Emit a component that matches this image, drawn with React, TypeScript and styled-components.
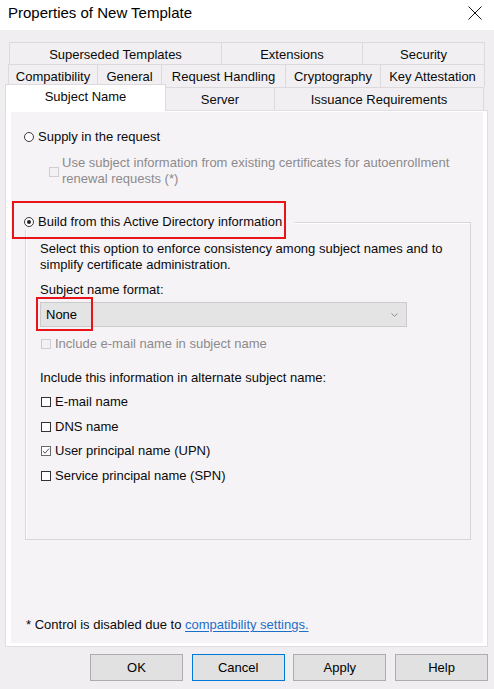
import React from "react";
import styled, { createGlobalStyle } from "styled-components";

const Global = createGlobalStyle`
  html, body { margin: 0; padding: 0; background: #f0eef0; }
  * { box-sizing: border-box; }
`;

const FONT = `"Liberation Sans", Arial, sans-serif`;
const INNER_BG = "#f6f3f6";

const Window = styled.div`
  width: 494px;
  height: 689px;
  display: flex;
  flex-direction: column;
  background: #f0eef0;
  font-family: ${FONT};
  font-size: 13px;
  color: #0a0a0a;
  overflow: hidden;
`;

const TitleBar = styled.div`
  height: 30px;
  flex: none;
  background: #ffffff;
  display: flex;
  align-items: center;
  justify-content: space-between;
  padding: 0 12px 0 8px;
`;

const Title = styled.div`
  font-size: 15px;
  color: #000;
  line-height: 18px;
  margin-top: -4px;
`;

const CloseButton = styled.div`
  width: 14px;
  height: 14px;
  display: flex;
  margin-top: -5px;
`;

const Body = styled.div`
  flex: 1;
  display: flex;
  flex-direction: column;
  padding: 12px 6px 8px 5px;
`;

const TabStrip = styled.div`
  display: flex;
  flex-direction: column;
`;

const TabRow = styled.div<{ $h: number; $pl: number }>`
  display: flex;
  height: ${(p) => p.$h}px;
  padding-left: ${(p) => p.$pl}px;
`;

const Tab = styled.div<{ $w: number; $first?: boolean }>`
  width: ${(p) => p.$w}px;
  height: 100%;
  margin-left: ${(p) => (p.$first ? 0 : -1)}px;
  border: 1px solid #dcdadc;
  border-bottom: none;
  background: #f1eff1;
  display: flex;
  align-items: center;
  justify-content: center;
  white-space: nowrap;
  color: #0a0a0a;
  padding-top: 1px;
`;

const ActiveTab = styled.div<{ $w: number }>`
  width: ${(p) => p.$w}px;
  height: 27px;
  margin-top: -3px;
  margin-left: -3px;
  margin-bottom: -1px;
  position: relative;
  z-index: 2;
  background: #ffffff;
  border: 1px solid #dcdadc;
  border-bottom: none;
  display: flex;
  justify-content: center;
  padding-top: 4px;
  white-space: nowrap;
  color: #0a0a0a;
`;

const Panel = styled.div`
  flex: 1;
  display: flex;
  background: #ffffff;
  border: 1px solid #e0dee0;
  padding: 1px 4px 3px 5px;
  position: relative;
  z-index: 1;
`;

const PanelInner = styled.div`
  flex: 1;
  background: ${INNER_BG};
  display: flex;
  flex-direction: column;
  padding: 17px 0 10px 13px;
`;

const OptionRow = styled.div<{ $mt?: number; $ml?: number }>`
  display: flex;
  align-items: center;
  height: 16px;
  line-height: 16px;
  margin-top: ${(p) => p.$mt ?? 0}px;
  margin-left: ${(p) => p.$ml ?? 0}px;
  white-space: nowrap;
`;

const Radio = styled.span<{ $on?: boolean }>`
  width: 10px;
  height: 10px;
  border-radius: 50%;
  border: 1px solid #3a3a3a;
  background: #fff;
  flex: none;
  display: flex;
  align-items: center;
  justify-content: center;
  margin-right: 4px;
  &::after {
    content: "";
    display: ${(p) => (p.$on ? "block" : "none")};
    width: 4px;
    height: 4px;
    border-radius: 50%;
    background: #222;
  }
`;

const Box = styled.span<{ $disabled?: boolean; $checked?: boolean }>`
  width: 10px;
  height: 10px;
  flex: none;
  border: 1px solid
    ${(p) => (p.$disabled ? "#cfcdcf" : p.$checked ? "#6a6a6a" : "#333")};
  background: ${(p) => (p.$disabled ? "#f3f1f3" : "#fff")};
  display: flex;
  align-items: center;
  justify-content: center;
  margin-right: 4px;
`;

const Label = styled.span<{ $disabled?: boolean }>`
  color: ${(p) => (p.$disabled ? "#8c8a8c" : "#0a0a0a")};
`;

const SubOption = styled.div`
  display: flex;
  align-items: center;
  margin-top: 11px;
  margin-left: 25px;
`;

const SubText = styled.div`
  line-height: 16px;
  color: #8c8a8c;
  margin-left: -1px;
  margin-top: -1px;
  white-space: nowrap;
`;

const GroupBox = styled.div`
  margin-top: 35px;
  margin-left: 1px;
  width: 446px;
  height: 318px;
  border: 1px solid #d8d6d8;
  box-shadow: inset 1px 1px 0 #ffffff;
  display: flex;
  flex-direction: column;
  padding-left: 14px;
`;

const Caption = styled.div`
  position: relative;
  align-self: flex-start;
  display: flex;
  align-items: center;
  height: 16px;
  line-height: 16px;
  margin-top: -9px;
  margin-left: -16px;
  padding-right: 13px;
  background: ${INNER_BG};
  white-space: nowrap;
`;

const Highlight = styled.span<{
  $l: number;
  $t: number;
  $w: number;
  $h: number;
}>`
  position: absolute;
  left: ${(p) => p.$l}px;
  top: ${(p) => p.$t}px;
  width: ${(p) => p.$w}px;
  height: ${(p) => p.$h}px;
  border: 2px solid #e8141a;
  pointer-events: none;
`;

const Text = styled.div<{ $mt: number }>`
  line-height: 16px;
  margin-top: ${(p) => p.$mt}px;
  white-space: nowrap;
  color: #0a0a0a;
`;

const Combo = styled.div`
  position: relative;
  margin-top: 4px;
  width: 367px;
  height: 25px;
  background: #e5e4e5;
  border: 1px solid #cccbcc;
  display: flex;
  align-items: center;
  justify-content: space-between;
  padding: 0 8px 0 5px;
  color: #000;
`;

const Footer = styled.div`
  margin-top: auto;
  margin-left: 2px;
  line-height: 16px;
  white-space: nowrap;
  color: #0a0a0a;
`;

const Link = styled.a`
  color: #1a6fc9;
  text-decoration: underline;
  text-underline-offset: 2px;
`;

const ButtonRow = styled.div`
  display: flex;
  justify-content: flex-end;
  gap: 8.7px;
  margin-top: 7px;
  padding-right: 0;
`;

const Button = styled.div<{ $focus?: boolean }>`
  width: 93px;
  height: 27px;
  background: #e1e1e1;
  border: 1px solid ${(p) => (p.$focus ? "#0078d7" : "#adadad")};
  display: flex;
  align-items: center;
  justify-content: center;
  color: #000;
  font-size: 13px;
`;

const CheckMark = () => (
  <svg width="8" height="8" viewBox="0 0 8 8">
    <path d="M1 4.2 L3.1 6.2 L7 1.6" fill="none" stroke="#555" strokeWidth="1" />
  </svg>
);

const Chevron = () => (
  <svg width="7" height="4" viewBox="0 0 7 4">
    <path d="M0.5 0.5 L3.5 3.3 L6.5 0.5" fill="none" stroke="#8a8a8a" strokeWidth="1" />
  </svg>
);

const CloseIcon = () => (
  <svg width="14" height="14" viewBox="0 0 14 14">
    <path d="M0.5 0.5 L13.5 13.5 M13.5 0.5 L0.5 13.5" stroke="#111" strokeWidth="1" />
  </svg>
);

const row1 = [
  { t: "Superseded Templates", w: 213 },
  { t: "Extensions", w: 142 },
  { t: "Security", w: 123 },
];
const row2 = [
  { t: "Compatibility", w: 90 },
  { t: "General", w: 65 },
  { t: "Request Handling", w: 125 },
  { t: "Cryptography", w: 96 },
  { t: "Key Attestation", w: 105 },
];

const altNames = [
  { t: "E-mail name", checked: false, mt: 8 },
  { t: "DNS name", checked: false, mt: 9 },
  { t: "User principal name (UPN)", checked: true, mt: 8 },
  { t: "Service principal name (SPN)", checked: false, mt: 9 },
];

export default function App() {
  return (
    <>
      <Global />
      <Window>
        <TitleBar>
          <Title>Properties of New Template</Title>
          <CloseButton>
            <CloseIcon />
          </CloseButton>
        </TitleBar>
        <Body>
          <TabStrip>
            <TabRow $h={22} $pl={4}>
              {row1.map((r, i) => (
                <Tab key={r.t} $w={r.w} $first={i === 0}>
                  {r.t}
                </Tab>
              ))}
            </TabRow>
            <TabRow $h={23} $pl={3}>
              {row2.map((r, i) => (
                <Tab key={r.t} $w={r.w} $first={i === 0}>
                  {r.t}
                </Tab>
              ))}
            </TabRow>
            <TabRow $h={23} $pl={3}>
              <ActiveTab $w={161}>Subject Name</ActiveTab>
              <Tab $w={110}>Server</Tab>
              <Tab $w={210}>Issuance Requirements</Tab>
            </TabRow>
          </TabStrip>
          <Panel>
            <PanelInner>
              <OptionRow>
                <Radio />
                <Label>Supply in the request</Label>
              </OptionRow>
              <SubOption>
                <Box $disabled />
                <SubText>
                  Use subject information from existing certificates for autoenrollment
                  <br />
                  renewal requests (*)
                </SubText>
              </SubOption>
              <GroupBox>
                <Caption>
                  <Radio $on />
                  <Label>Build from this Active Directory information</Label>
                  <Highlight $l={-12} $t={-13} $w={274} $h={38} />
                </Caption>
                <Text $mt={11}>
                  Select this option to enforce consistency among subject names and to
                  <br />
                  simplify certificate administration.
                </Text>
                <Text $mt={9}>Subject name format:</Text>
                <Combo>
                  <span>None</span>
                  <Chevron />
                  <Highlight $l={-5} $t={-6} $w={57} $h={34} />
                </Combo>
                <OptionRow $mt={9} $ml={1}>
                  <Box $disabled />
                  <Label $disabled>Include e-mail name in subject name</Label>
                </OptionRow>
                <Text $mt={18}>Include this information in alternate subject name:</Text>
                {altNames.map((a) => (
                  <OptionRow key={a.t} $mt={a.mt} $ml={1}>
                    <Box $checked={a.checked}>{a.checked && <CheckMark />}</Box>
                    <Label>{a.t}</Label>
                  </OptionRow>
                ))}
              </GroupBox>
              <Footer>
                * Control is disabled due to <Link>compatibility settings.</Link>
              </Footer>
            </PanelInner>
          </Panel>
          <ButtonRow>
            <Button>OK</Button>
            <Button $focus>Cancel</Button>
            <Button>Apply</Button>
            <Button>Help</Button>
          </ButtonRow>
        </Body>
      </Window>
    </>
  );
}
